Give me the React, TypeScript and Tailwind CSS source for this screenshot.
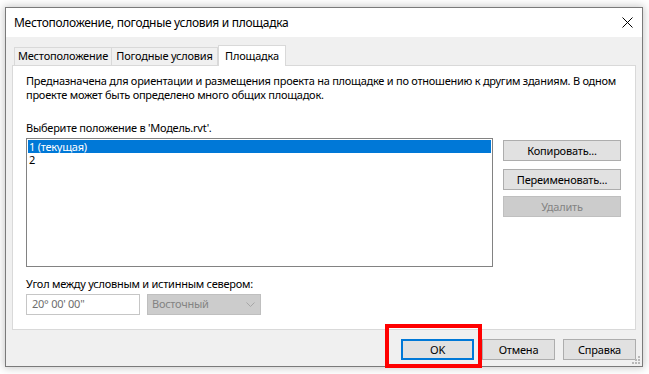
import React from "react";

const font = { fontFamily: '"Noto Sans", "Liberation Sans", sans-serif' };

function Btn({
  label,
  disabled = false,
  primary = false,
  className = "",
}: {
  label: string;
  disabled?: boolean;
  primary?: boolean;
  className?: string;
}) {
  const look = disabled
    ? "bg-[#cccccc] border border-[#bfbfbf] text-[#838383]"
    : primary
      ? "bg-[#e1e1e1] border-2 border-[#0078d7] text-black"
      : "bg-[#e1e1e1] border border-[#adadad] text-black";
  return (
    <div
      className={`h-[21px] flex items-center justify-center text-[11px] tracking-[-0.2px] leading-none ${look} ${className}`}
    >
      {label}
    </div>
  );
}

export default function App() {
  return (
    <div
      className="relative w-[649px] h-[374px] bg-white overflow-hidden pt-[7px] pl-[5px]"
      style={font}
    >
      <div className="w-[638px] h-[360px] border border-[#7a7a7a] bg-[#f0f0f0] flex flex-col shadow-[0_0_8px_1px_rgba(0,0,0,0.22)]">
        {/* title bar */}
        <div className="h-[29px] bg-white flex items-center justify-between pl-[8px] pr-[8px] shrink-0">
          <span className="text-[12px] tracking-[-0.3px] text-black">
            Местоположение, погодные условия и площадка
          </span>
          <svg width="11" height="11" viewBox="0 0 11 11" className="mr-[1px]">
            <path d="M0.5 0.5 L10.5 10.5 M10.5 0.5 L0.5 10.5" stroke="#000" strokeWidth="1" />
          </svg>
        </div>

        {/* body */}
        <div className="flex-1 flex flex-col px-[6px] pt-[8px]">
          {/* tabs */}
          <div className="flex items-end h-[20px] pl-[2px] relative z-10 text-[11px] tracking-[-0.2px]">
            <div className="h-[18px] border border-b-0 border-[#d9d9d9] bg-[#f0f0f0] flex items-center w-[98px] justify-center">
              Местоположение
            </div>
            <div className="h-[18px] border border-l-0 border-b-0 border-[#d9d9d9] bg-[#f0f0f0] flex items-center w-[106px] justify-center">
              Погодные условия
            </div>
            <div className="h-[21px] -mb-px border border-b-0 border-[#d9d9d9] bg-white flex items-start pt-[2px] w-[68px] justify-center">
              Площадка
            </div>
          </div>

          {/* panel */}
          <div className="h-[265px] border border-[#d9d9d9] bg-white pl-[13px] pt-[8px] text-[11px] tracking-[-0.25px] text-black">
            <p className="leading-[14px] w-[600px]">
              Предназначена для ориентации и размещения проекта на площадке и по отношению к другим зданиям. В одном проекте может быть определено много общих площадок.
            </p>
            <p className="leading-[15px] mt-[18px]">Выберите положение в 'Модель.rvt'.</p>

            <div className="flex mt-[3px]">
              <div className="w-[467px] h-[129px] border border-[#828282] p-px">
                <div className="h-[13px] bg-[#0078d7] text-white leading-[13px] pl-[1px]">1 (текущая)</div>
                <div className="h-[13px] leading-[13px] pl-[1px]">2</div>
              </div>
              <div className="ml-[10px] mt-[2px] w-[118px] flex flex-col">
                <Btn label="Копировать..." />
                <Btn label="Переименовать..." className="mt-[8px]" />
                <Btn label="Удалить" disabled className="mt-[6px]" />
              </div>
            </div>

            <p className="leading-[15px] mt-[9px]">Угол между условным и истинным севером:</p>
            <div className="flex mt-[3px]">
              <div className="w-[114px] h-[21px] border border-[#c6c6c6] bg-white text-[#6d6d6d] flex items-center pl-[5px]">
                20° 00' 00"
              </div>
              <div className="w-[114px] h-[21px] ml-[7px] border border-[#bfbfbf] bg-[#cccccc] text-[#838383] flex items-center justify-between pl-[4px] pr-[5px]">
                <span>Восточный</span>
                <svg width="9" height="6" viewBox="0 0 9 6">
                  <path d="M0.5 0.5 L4.5 4.5 L8.5 0.5" fill="none" stroke="#a6a6a6" strokeWidth="1" />
                </svg>
              </div>
            </div>
          </div>

          {/* bottom buttons */}
          <div className="flex justify-end gap-[8px] mt-[9px]">
            <Btn label="OK" primary className="w-[73px]" />
            <Btn label="Отмена" className="w-[73px]" />
            <Btn label="Справка" className="w-[73px]" />
          </div>
        </div>

        {/* size grip */}
        <div className="relative h-0">
          <svg width="9" height="9" viewBox="0 0 9 9" className="absolute right-[1px] bottom-[1px]">
            <rect x="6" y="0" width="2" height="2" fill="#b8b8b8" />
            <rect x="3" y="3" width="2" height="2" fill="#b8b8b8" />
            <rect x="6" y="3" width="2" height="2" fill="#b8b8b8" />
            <rect x="0" y="6" width="2" height="2" fill="#b8b8b8" />
            <rect x="3" y="6" width="2" height="2" fill="#b8b8b8" />
            <rect x="6" y="6" width="2" height="2" fill="#b8b8b8" />
          </svg>
        </div>
      </div>

      {/* red highlight */}
      <div className="absolute left-[385px] top-[324px] w-[97px] h-[44px] border-4 border-[#ff0000]" />
    </div>
  );
}
